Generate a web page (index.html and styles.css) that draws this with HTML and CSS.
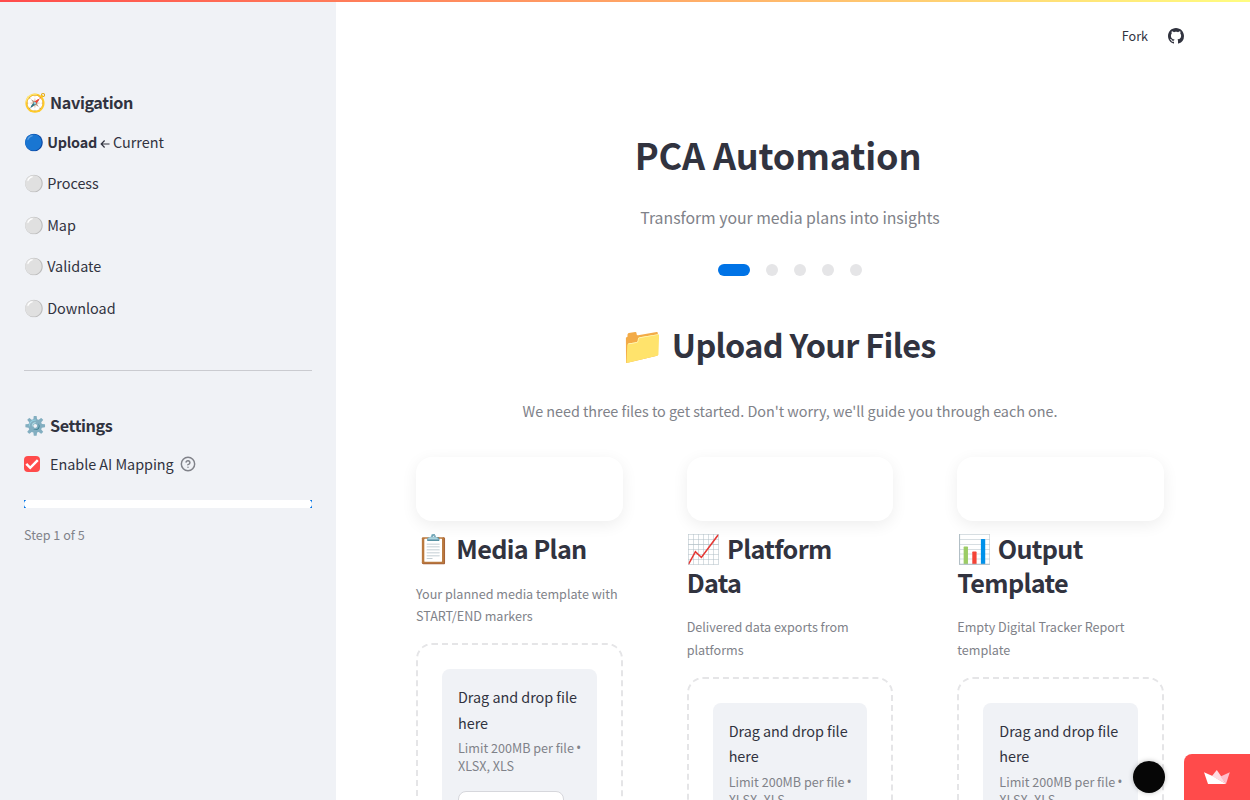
FILE: index.html
```html
<!DOCTYPE html>
<html lang="en">
<head>
<meta charset="utf-8">
<title>PCA Automation</title>
<link rel="stylesheet" href="styles.css">
</head>
<body>
<div class="decoration"></div>
<div class="app">
  <aside class="sidebar">
    <h3 class="side-title"><span class="emoji">🧭</span> Navigation</h3>
    <ul class="nav">
      <li><span class="emoji">🔵</span> <b>Upload</b> <svg class="arrow" viewBox="0 0 10 10"><path d="M9.500 5H1.200M4.600 1.500L1.200 5l3.400 3.500" fill="none" stroke="#31333f" stroke-width="1.2"/></svg> Current</li>
      <li><span class="emoji">⚪</span> Process</li>
      <li><span class="emoji">⚪</span> Map</li>
      <li><span class="emoji">⚪</span> Validate</li>
      <li><span class="emoji">⚪</span> Download</li>
    </ul>
    <hr class="rule">
    <h3 class="side-title"><span class="emoji">⚙️</span> Settings</h3>
    <div class="check">
      <span class="box"><svg viewBox="0 0 16 16"><path d="M2.300 7.900l3.900 3.900 7.600-7.600" fill="none" stroke="#fff" stroke-width="2.500"/></svg></span>
      <span class="check-label">Enable AI Mapping</span>
      <svg class="help" viewBox="0 0 24 24" fill="none" stroke="#808289" stroke-width="2.2" stroke-linecap="round" stroke-linejoin="round"><circle cx="12" cy="12" r="10"/><path d="M9.090 9a3 3 0 0 1 5.830 1c0 2-3 3-3 3M12 17h.01"/></svg>
    </div>
    <div class="progress"><div class="progress-track"></div></div>
    <p class="step">Step 1 of 5</p>
  </aside>
  <main class="main">
    <header class="toolbar">
      <span class="fork">Fork</span>
      <svg class="github" viewBox="0 0 16 16" fill="#31333f"><path d="M8 0C3.58 0 0 3.58 0 8c0 3.54 2.29 6.53 5.47 7.59.4.07.55-.17.55-.38 0-.19-.01-.82-.01-1.49-2.01.37-2.53-.49-2.69-.94-.09-.23-.48-.94-.82-1.13-.28-.15-.68-.52-.01-.53.63-.01 1.08.58 1.23.82.72 1.21 1.87.87 2.33.66.07-.52.28-.87.51-1.07-1.78-.2-3.64-.89-3.64-3.95 0-.87.31-1.59.82-2.15-.08-.2-.36-1.02.08-2.12 0 0 .67-.21 2.2.82.64-.18 1.32-.27 2-.27s1.36.09 2 .27c1.53-1.04 2.2-.82 2.2-.82.44 1.1.16 1.92.08 2.12.51.56.82 1.27.82 2.15 0 3.07-1.87 3.75-3.65 3.95.29.25.54.73.54 1.48 0 1.07-.01 1.93-.01 2.2 0 .21.15.46.55.38A8.01 8.01 0 0 0 16 8c0-4.42-3.58-8-8-8z"/></svg>
    </header>
    <h1 class="title">PCA Automation</h1>
    <p class="subtitle">Transform your media plans into insights</p>
    <div class="dots"><i class="active"></i><i></i><i></i><i></i><i></i></div>
    <h2 class="heading"><span class="emoji">📁</span> Upload Your Files</h2>
    <p class="intro">We need three files to get started. Don't worry, we'll guide you through each one.</p>
    <div class="columns">
      <section class="column">
        <div class="card"></div>
        <h3 class="col-title"><span class="emoji">📋</span> Media Plan</h3>
        <p class="desc">Your planned media template with<br>START/END markers</p>
        <div class="uploader"><div class="dropzone">
          <div class="drop-text">Drag and drop file<br>here</div>
          <div class="limit">Limit 200MB per file <span class="bullet">•</span><br>XLSX, XLS</div>
          <div class="browse"></div>
        </div></div>
      </section>
      <section class="column">
        <div class="card"></div>
        <h3 class="col-title"><span class="emoji">📈</span> Platform<br>Data</h3>
        <p class="desc">Delivered data exports from<br>platforms</p>
        <div class="uploader"><div class="dropzone">
          <div class="drop-text">Drag and drop file<br>here</div>
          <div class="limit">Limit 200MB per file <span class="bullet">•</span><br>XLSX, XLS</div>
          <div class="browse"></div>
        </div></div>
      </section>
      <section class="column">
        <div class="card"></div>
        <h3 class="col-title"><span class="emoji">📊</span> Output<br>Template</h3>
        <p class="desc">Empty Digital Tracker Report<br>template</p>
        <div class="uploader"><div class="dropzone">
          <div class="drop-text">Drag and drop file<br>here</div>
          <div class="limit">Limit 200MB per file <span class="bullet">•</span><br>XLSX, XLS</div>
          <div class="browse"></div>
        </div></div>
      </section>
    </div>
  </main>
</div>
<div class="avatar"></div>
<div class="badge"><svg viewBox="0 0 26 15"><path d="M8 6L12.800 0 18 7.500 22 14z" fill="#ffdbe2"/><path d="M16.500 6.500L25.800 2.300 22 14z" fill="#ffbcc9"/><path d="M0 2.300L8.500 6 22 14H4z" fill="#fff"/></svg></div>
</body>
</html>
```
FILE: styles.css
```css
* { box-sizing: border-box; }
body {
  margin: 0;
  height: 800px;
  overflow: hidden;
  background: #fff;
  color: #31333f;
  font-family: "Source Sans Pro", "Noto Sans CJK SC", "Noto Sans", sans-serif;
  font-size: 14.4px;
}
h1, h2, h3, p, ul { margin: 0; padding: 0; }
.emoji { font-family: "Noto Color Emoji", sans-serif; line-height: 0; font-weight: 400; letter-spacing: 0; }
.decoration {
  position: absolute;
  inset: 0 0 auto;
  height: 2px;
  background: linear-gradient(90deg, #ff4b4b, #fffd80);
  z-index: 3;
}
.app { display: flex; height: 800px; overflow: hidden; }
.sidebar { width: 336px; flex: none; padding: 88px 24px 0; background: #f0f2f6; }
.side-title { font-size: 16.2px; line-height: 28px; font-weight: 600; letter-spacing: -.4px; word-spacing: .4px; }
.side-title .emoji { font-size: 18px; }
.nav { list-style: none; padding-top: 13px; }
.nav li { height: 25.6px; line-height: 25.6px; margin-bottom: 15.9px; white-space: nowrap; }
.nav b { letter-spacing: -.2px; }
.nav .emoji { font-size: 16px; }
.arrow { width: 10px; height: 10px; margin-right: -.6px; vertical-align: -1px; }
.rule { margin: 49px 0 40px; border: 0; border-top: 1px solid #cacbd0; }
.check { display: flex; align-items: center; height: 24px; margin-top: 13px; }
.box { width: 16px; height: 16px; border-radius: 4px; background: #ff4b4b; }
.box svg { display: block; }
.check-label { margin-left: 10px; letter-spacing: -.03px; }
.help { width: 16px; height: 16px; margin-left: 6.5px; }
.progress { height: 8px; margin-top: 24px; background: linear-gradient(90deg, #0073e6 2px, #fff 2px, #fff 286px, #0073e6 286px); }
.progress-track { height: 8px; border-radius: 4px; background: #fff; }
.step { margin-top: 16px; font-size: 12.6px; line-height: 21px; color: #808289; }
.main { flex: 1; height: 800px; overflow: hidden; padding: 0 86px 0 80px; }
.toolbar { display: flex; justify-content: flex-end; align-items: center; gap: 20px; height: 72px; margin-right: -20px; font-size: 12.6px; }
.fork { padding-bottom: 2px; }
.github { width: 16px; height: 16px; }
.title { margin-top: 58px; padding-right: 24px; text-align: center; font-size: 36px; line-height: 48px; font-weight: 700; letter-spacing: -.15px; }
.subtitle { margin-top: 25px; text-align: center; font-size: 15.84px; line-height: 30px; color: #808289; letter-spacing: -.03px; }
.dots { display: flex; justify-content: center; gap: 16px; margin-top: 31px; }
.dots i { width: 12px; height: 12px; border-radius: 6px; background: #e5e5e7; }
.dots .active { width: 32px; background: #0073e6; }
.heading { margin-top: 46px; padding-right: 24px; text-align: center; font-size: 32.4px; line-height: 44px; font-weight: 600; letter-spacing: -.7px; }
.heading .emoji { font-size: 36px; }
.intro { margin-top: 32px; text-align: center; line-height: 26px; color: #808289; letter-spacing: -.035px; }
.columns { display: grid; grid-template-columns: repeat(3, 1fr); gap: 64px; margin-top: 33px; }
.column { white-space: nowrap; min-width: 0; }
.card { height: 64px; border-radius: 16px; box-shadow: 0 4px 16px rgba(0,0,0,.07); }
.col-title { margin-top: 11px; font-size: 25.2px; line-height: 33.6px; font-weight: 600; letter-spacing: -.65px; word-spacing: .4px; }
.col-title .emoji { font-size: 28px; }
.desc { margin-top: 17px; font-size: 12.6px; line-height: 22.4px; color: #808289; letter-spacing: -.02px; }
.uploader { height: 260px; margin-top: 16px; padding: 24px; border: 2px dashed #e5e5e7; border-radius: 16px; }
.dropzone { padding: 14.8px 16px 16px; background: #f0f2f6; border-radius: 8px; }
.drop-text { line-height: 25.6px; letter-spacing: -.03px; }
.limit { margin-top: 4px; font-size: 12.6px; line-height: 18px; color: #808289; }
.bullet { font-family: "Open Sans", sans-serif; font-size: 14px; line-height: 0; margin-left: -.8px; }
.browse { width: 106px; height: 40px; margin-top: 16px; border: 1px solid #d6d7dc; border-radius: 8px; background: #fff; }
.avatar { position: absolute; left: 1133px; top: 761px; width: 32px; height: 32px; border-radius: 50%; background: #060606; box-shadow: 0 0 5px rgba(0,0,0,.25); }
.badge { position: absolute; right: 0; bottom: 0; width: 66px; height: 46px; padding: 16px 20px 15px; background: #ff4b4b; border-top-left-radius: 8px; }
.badge svg { display: block; width: 26px; height: 15px; }
```
